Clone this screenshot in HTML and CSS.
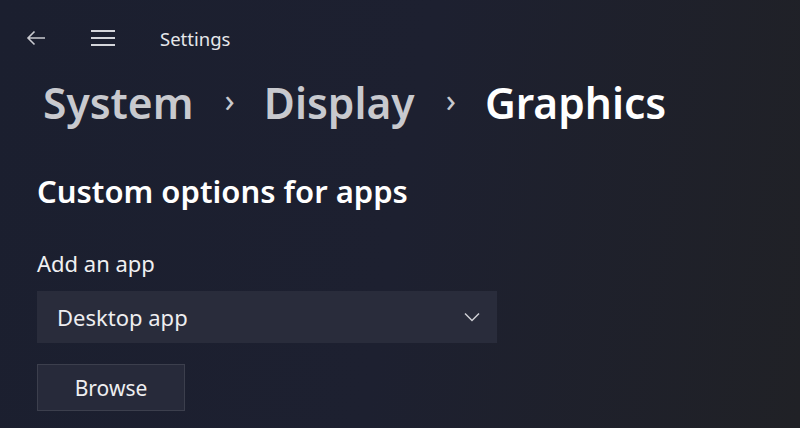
FILE: index.html
```html
<!DOCTYPE html>
<html>
<head>
  <title>Settings</title>
  <link rel="stylesheet" href="styles.css">
</head>
<body>
  <div class="title-bar">
    <button class="icon-btn back-btn" aria-label="Back">
      <svg width="20" height="16" viewBox="0 0 20 16"><path d="M19 8H2M8.5 1.5L2 8l6.5 6.5" fill="none" stroke="#c9cad0" stroke-width="1.6"/></svg>
    </button>
    <button class="icon-btn menu-btn" aria-label="Menu">
      <svg width="26" height="18" viewBox="0 0 26 18"><path d="M1 2h24M1 9h24M1 16h24" fill="none" stroke="#d4d5da" stroke-width="1.8"/></svg>
    </button>
    <span class="app-title">Settings</span>
  </div>

  <div class="content">
    <h1 class="breadcrumb">
      <span class="crumb">System</span>
      <span class="sep">&#x203A;</span>
      <span class="crumb">Display</span>
      <span class="sep">&#x203A;</span>
      <span class="crumb current">Graphics</span>
    </h1>

    <h2 class="section-title">Custom options for apps</h2>

    <div class="field">
      <label class="field-label">Add an app</label>
      <div class="dropdown">
        <span>Desktop app</span>
        <svg width="16" height="10" viewBox="0 0 16 10"><path d="M1 1.5l7 7 7-7" fill="none" stroke="#cfd0d5" stroke-width="1.5"/></svg>
      </div>
      <button class="browse-btn">Browse</button>
    </div>
  </div>
</body>
</html>
```

FILE: styles.css
```css
html, body {
  height: 100%;
}

body {
  margin: 0;
  font-family: "Noto Sans", "Open Sans", sans-serif;
  color: #ffffff;
  background: linear-gradient(100deg, #1b1f2f 0%, #1d2030 50%, #202126 100%);
  overflow: hidden;
}

.title-bar {
  display: flex;
  align-items: center;
  height: 40px;
  padding: 18px 0 0 26px;
}

.icon-btn {
  background: none;
  border: none;
  padding: 0;
  display: flex;
  align-items: center;
  cursor: pointer;
}

.back-btn {
  margin-right: 44px;
}

.menu-btn {
  margin-right: 44px;
}

.app-title {
  font-size: 18.5px;
  color: #e6e7ea;
}

.content {
  padding: 0 0 0 37px;
}

.breadcrumb {
  display: flex;
  align-items: center;
  margin: 14px 0 0 6px;
  font-size: 42.5px;
  font-weight: 600;
  line-height: 56px;
}

.crumb {
  color: #c8c9ce;
}

.crumb.current {
  color: #ffffff;
}

.sep {
  color: #c8c9ce;
  font-size: 33px;
  font-weight: 400;
  margin: 0 29px 6px 31px;
}

.section-title {
  margin: 37px 0 0 0;
  font-size: 31px;
  font-weight: 600;
  line-height: 40px;
}

.field-label {
  display: block;
  margin-top: 37px;
  font-size: 22px;
  color: #f0f0f2;
  line-height: 30px;
}

.dropdown {
  display: flex;
  align-items: center;
  justify-content: space-between;
  width: 460px;
  height: 52px;
  margin-top: 13px;
  padding: 0 17px 0 20px;
  box-sizing: border-box;
  background-color: #292c3b;
  font-size: 22px;
  color: #eeeef0;
}

.browse-btn {
  display: block;
  width: 148px;
  height: 47px;
  margin-top: 21px;
  background-color: #272a3a;
  border: 1px solid #3c3f4d;
  border-radius: 0;
  font-family: inherit;
  font-size: 21px;
  color: #eeeef0;
  cursor: pointer;
}
```
